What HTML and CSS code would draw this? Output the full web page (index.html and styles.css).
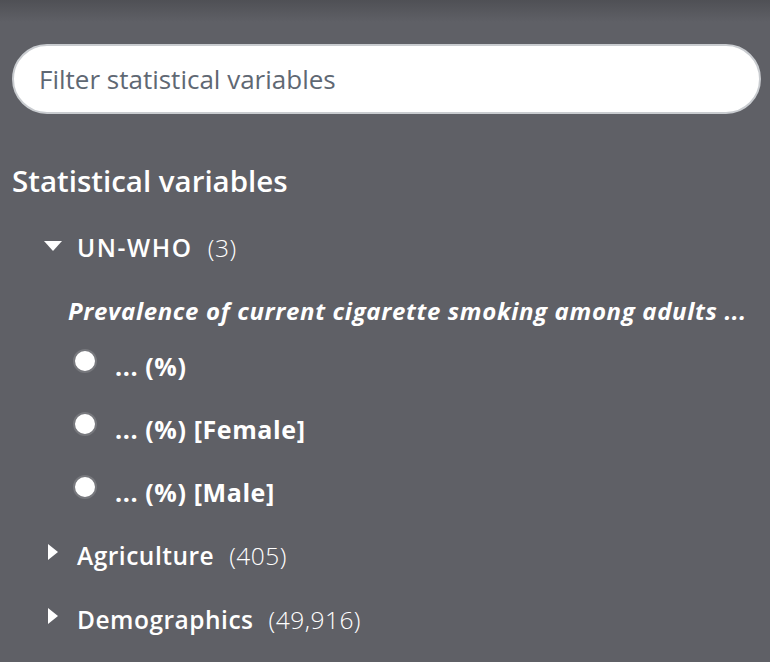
FILE: index.html
```html
<!DOCTYPE html>
<html lang="en">
<head>
    <meta charset="UTF-8">
    <meta name="viewport" content="width=device-width, initial-scale=1.0">
    <title>Statistical variables</title>
    <link rel="stylesheet" href="styles.css">
</head>
<body>
    <div class="panel">
        <div class="search">
            <input type="text" class="search-input" placeholder="Filter statistical variables">
        </div>
        <h2 class="title">Statistical variables</h2>
        <div class="node open">
            <div class="node-row">
                <span class="caret down"></span>
                <span class="node-name">UN-WHO</span>
                <span class="node-count">(3)</span>
            </div>
            <div class="group-title">Prevalence of current cigarette smoking among adults ...</div>
            <div class="sv-list">
                <label class="sv"><input type="radio" name="sv"><span>... (%)</span></label>
                <label class="sv"><input type="radio" name="sv"><span>... (%) [Female]</span></label>
                <label class="sv"><input type="radio" name="sv"><span>... (%) [Male]</span></label>
            </div>
        </div>
        <div class="node">
            <div class="node-row">
                <span class="caret right"></span>
                <span class="node-name">Agriculture</span>
                <span class="node-count">(405)</span>
            </div>
        </div>
        <div class="node">
            <div class="node-row">
                <span class="caret right"></span>
                <span class="node-name">Demographics</span>
                <span class="node-count">(49,916)</span>
            </div>
        </div>
    </div>
</body>
</html>
```

FILE: styles.css
```css
body {
    margin: 0;
    background: #5f6066;
    font-family: "Open Sans", "Noto Sans", sans-serif;
    color: #fff;
}
.panel {
    height: 662px;
    overflow: hidden;
    box-sizing: border-box;
    padding: 44px 9px 0 12px;
    background: linear-gradient(#4f5055, #5f6066 22px);
}
.search-input {
    box-sizing: border-box;
    width: 100%;
    height: 70px;
    padding: 0 25px;
    border: 2px solid #c9ccd0;
    border-radius: 35px;
    background: #fff;
    font-family: inherit;
    font-size: 26px;
    color: #333;
}
.search-input::placeholder {
    color: #5f6873;
}
.search-input:focus {
    outline: none;
}
.title {
    margin: 49px 0 0 0;
    font-size: 29.5px;
    font-weight: 600;
    line-height: 36px;
}
.node {
    padding-left: 32px;
}
.node-row {
    display: flex;
    align-items: center;
    height: 64px;
    font-size: 24.5px;
    letter-spacing: 0.5px;
}
.open .node-row {
    margin-top: 16px;
}
.open .node-name {
    letter-spacing: 1.6px;
}
.caret {
    width: 0;
    height: 0;
}
.caret.down {
    margin: -2px 15px 0 0;
    border-left: 9px solid transparent;
    border-right: 9px solid transparent;
    border-top: 10px solid #fff;
}
.caret.right {
    margin: -6px 19px 0 4px;
    border-top: 8px solid transparent;
    border-bottom: 8px solid transparent;
    border-left: 10px solid #fff;
}
.node-name {
    font-weight: 600;
    margin-right: 15px;
}
.node-count {
    font-weight: 300;
}
.group-title {
    margin: 17px 0 0 24px;
    font-size: 24px;
    font-weight: 700;
    font-style: italic;
    line-height: 30px;
    letter-spacing: 0.65px;
    white-space: nowrap;
}
.sv-list {
    margin-top: 8px;
}
.sv {
    display: flex;
    align-items: center;
    height: 63px;
    padding-left: 30px;
    font-size: 25px;
    font-weight: 700;
    letter-spacing: 0.6px;
}
.sv input {
    appearance: none;
    width: 24px;
    height: 24px;
    margin: -9px 18px 0 -1px;
    border: 2px solid #77787d;
    border-radius: 50%;
    background: #fff;
}
```
